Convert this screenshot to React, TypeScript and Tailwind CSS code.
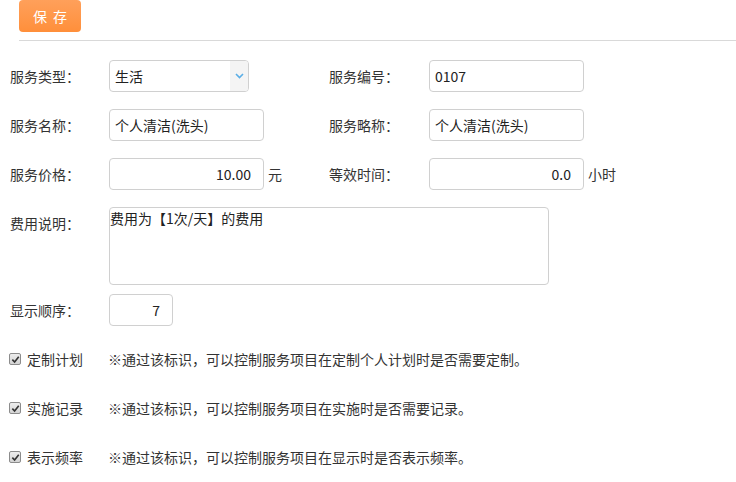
import React from "react";

const font = { fontFamily: '"Noto Sans CJK SC", "Liberation Sans", sans-serif' };

function Label({ children }: { children: React.ReactNode }) {
  return <div className="h-[32px] leading-[32px] text-[14px] text-[#333]">{children}</div>;
}

function TextInput({ value, w, right }: { value: string; w: string; right?: boolean }) {
  return (
    <div
      className={`h-[32px] ${w} border border-[#d0d0d0] rounded-[4px] bg-white flex items-center text-[14px] text-[#222] ${
        right ? "justify-end pr-[12px]" : "pl-[5px]"
      }`}
    >
      {value}
    </div>
  );
}

function Check({ label, desc }: { label: string; desc: string }) {
  return (
    <div className="flex items-center h-[32px]">
      <div className="w-[99px] flex items-center -ml-[1px]">
        <span className="w-[12px] h-[12px] border border-[#8c8c8c] rounded-[2px] bg-gradient-to-b from-[#ededed] to-[#d4d4d4] flex items-center justify-center">
          <svg width="9" height="9" viewBox="0 0 10 10">
            <path d="M1.5 5.2 L4 7.8 L8.6 2" stroke="#333" strokeWidth="1.8" fill="none" />
          </svg>
        </span>
        <span className="ml-[6px] text-[14px] text-[#333]">{label}</span>
      </div>
      <span className="text-[14px] text-[#333]">{desc}</span>
    </div>
  );
}

export default function App() {
  return (
    <div className="w-[736px] h-[482px] bg-white overflow-hidden" style={font}>
      <div className="pl-[19px]">
        <div className="w-[62px] h-[32px] rounded-[4px] bg-gradient-to-b from-[#ffa05a] to-[#ff8f3a] text-white text-[14px] flex items-center justify-center tracking-[6px] pl-[6px]">
          保存
        </div>
        <div className="mt-[8px] border-t border-[#d9d9d9]" />
      </div>

      <div className="pl-[10px] mt-[19px] flex flex-col">
        <div className="grid grid-cols-[99px_220px_100px_1fr] items-center">
          <Label>服务类型：</Label>
          <div className="h-[32px] w-[140px] border border-[#d0d0d0] rounded-[4px] bg-white flex items-center text-[14px] text-[#222] overflow-hidden">
            <span className="pl-[5px] flex-1">生活</span>
            <span className="w-[18px] h-full bg-[#f4f4f4] flex items-center justify-center">
              <svg width="9" height="6" viewBox="0 0 9 6">
                <path d="M1 1 L4.5 4.5 L8 1" stroke="#5aaee6" strokeWidth="1.6" fill="none" />
              </svg>
            </span>
          </div>
          <Label>服务编号：</Label>
          <TextInput value="0107" w="w-[155px]" />
        </div>

        <div className="grid grid-cols-[99px_220px_100px_1fr] items-center mt-[17px]">
          <Label>服务名称：</Label>
          <TextInput value="个人清洁(洗头)" w="w-[155px]" />
          <Label>服务略称：</Label>
          <TextInput value="个人清洁(洗头)" w="w-[155px]" />
        </div>

        <div className="grid grid-cols-[99px_220px_100px_1fr] items-center mt-[17px]">
          <Label>服务价格：</Label>
          <div className="flex items-center">
            <TextInput value="10.00" w="w-[155px]" right />
            <span className="ml-[4px] text-[14px] text-[#333]">元</span>
          </div>
          <Label>等效时间：</Label>
          <div className="flex items-center">
            <TextInput value="0.0" w="w-[155px]" right />
            <span className="ml-[4px] text-[14px] text-[#333]">小时</span>
          </div>
        </div>

        <div className="flex items-start mt-[17px]">
          <div className="w-[99px]">
            <Label>费用说明：</Label>
          </div>
          <div className="w-[440px] h-[78px] border border-[#d0d0d0] rounded-[4px] bg-white text-[14px] text-[#222] leading-[20px] pt-[0px] pl-[0px]">
            费用为【1次/天】的费用
          </div>
        </div>

        <div className="flex items-center mt-[9px]">
          <div className="w-[99px]">
            <Label>显示顺序：</Label>
          </div>
          <TextInput value="7" w="w-[64px]" right />
        </div>

        <div className="flex flex-col gap-[17px] mt-[17px]">
          <Check label="定制计划" desc="※通过该标识，可以控制服务项目在定制个人计划时是否需要定制。" />
          <Check label="实施记录" desc="※通过该标识，可以控制服务项目在实施时是否需要记录。" />
          <Check label="表示频率" desc="※通过该标识，可以控制服务项目在显示时是否表示频率。" />
        </div>
      </div>
    </div>
  );
}
